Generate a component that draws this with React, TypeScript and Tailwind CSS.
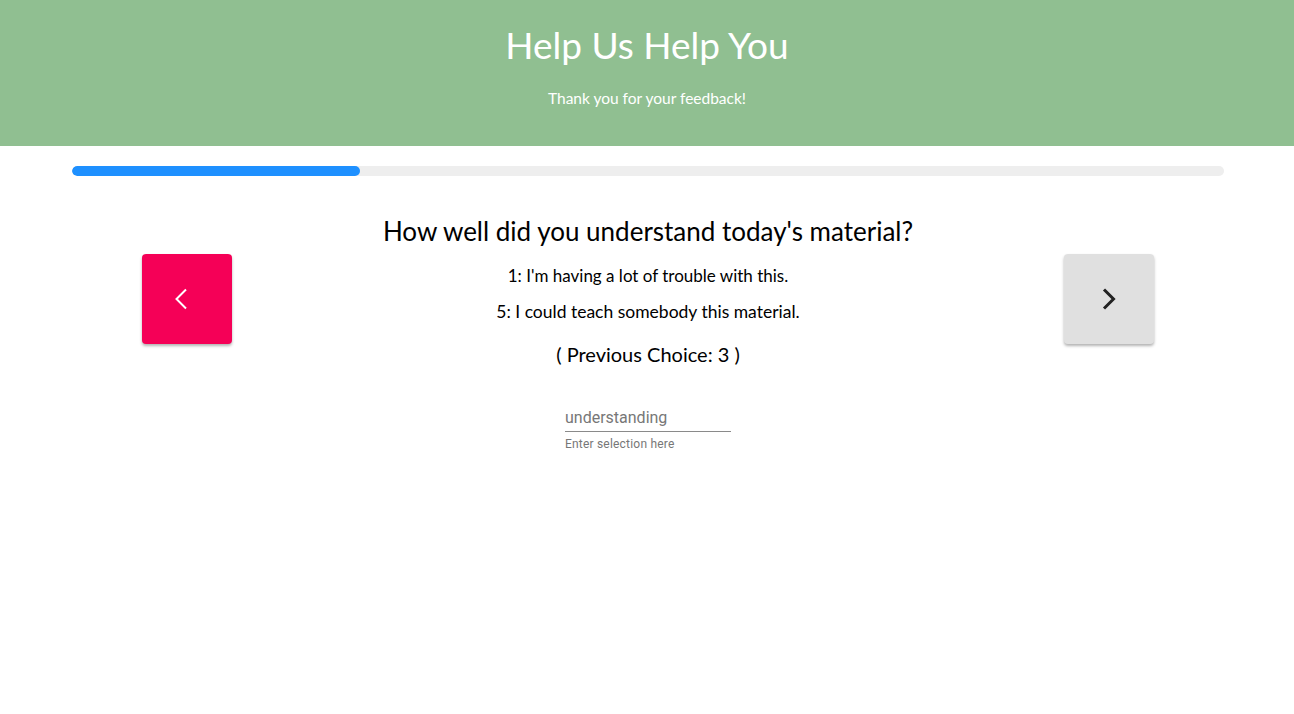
import React from "react"

const font = { fontFamily: "Lato, 'Open Sans', sans-serif" }

function Chevron({ dir, color, width }: { dir: "left" | "right"; color: string; width: number }) {
  return (
    <svg width="14" height="22" viewBox="0 0 14 22" fill="none">
      <path
        d={dir === "left" ? "M12 1.5L2.5 11l9.5 9.5" : "M2 1.5l9.5 9.5L2 20.5"}
        stroke={color}
        strokeWidth={width}
      />
    </svg>
  )
}

export default function App() {
  return (
    <div className="min-h-screen bg-white" style={font}>
      <header className="bg-[#90bf91] h-[146px] flex flex-col items-center text-white">
        <h1 className="text-[37px] leading-[44px] mt-[23px]">Help Us Help You</h1>
        <p className="text-[15.5px] leading-5 mt-[21px]">Thank you for your feedback!</p>
      </header>

      <div className="pl-[72px] pr-[70px] pt-5">
        <div className="h-[10px] rounded-full bg-[#eeeeee] overflow-hidden">
          <div className="h-full w-1/4 rounded-full bg-[#1e90ff]" />
        </div>
      </div>

      <h2 className="text-center text-[26px] leading-8 mt-[39px] text-black pl-[2px]">
        How well did you understand today's material?
      </h2>

      <div className="flex items-start pl-[142px] pr-[140px] mt-[7px]">
        <button className="w-[90px] h-[90px] rounded bg-[#f50057] flex items-center justify-center shadow-[0_2px_3px_rgba(0,0,0,0.3)]">
          <span className="mr-3 flex">
            <Chevron dir="left" color="#ffffff" width={2} />
          </span>
        </button>

        <div className="flex-1 flex flex-col items-center pt-[10px] text-black">
          <p className="text-[17px] leading-6">1: I'm having a lot of trouble with this.</p>
          <p className="text-[17.5px] leading-6 mt-3">5: I could teach somebody this material.</p>
          <p className="text-[20px] leading-6 mt-[18px]">( Previous Choice: 3 )</p>

          <div className="mt-[37px] w-[166px]" style={{ fontFamily: "Roboto, Helvetica, Arial, sans-serif" }}>
            <input
              placeholder="understanding"
              className="w-full h-[29px] text-[16px] text-[#555] placeholder:text-[#777] border-b border-[#8a8a8a] outline-none bg-transparent"
            />
            <p className="text-[12px] leading-4 mt-[4px] text-[#777] tracking-[0.2px]">Enter selection here</p>
          </div>
        </div>

        <button className="w-[90px] h-[90px] rounded bg-[#e0e0e0] flex items-center justify-center shadow-[0_2px_3px_rgba(0,0,0,0.3)]">
          <Chevron dir="right" color="#222222" width={3} />
        </button>
      </div>
    </div>
  )
}
